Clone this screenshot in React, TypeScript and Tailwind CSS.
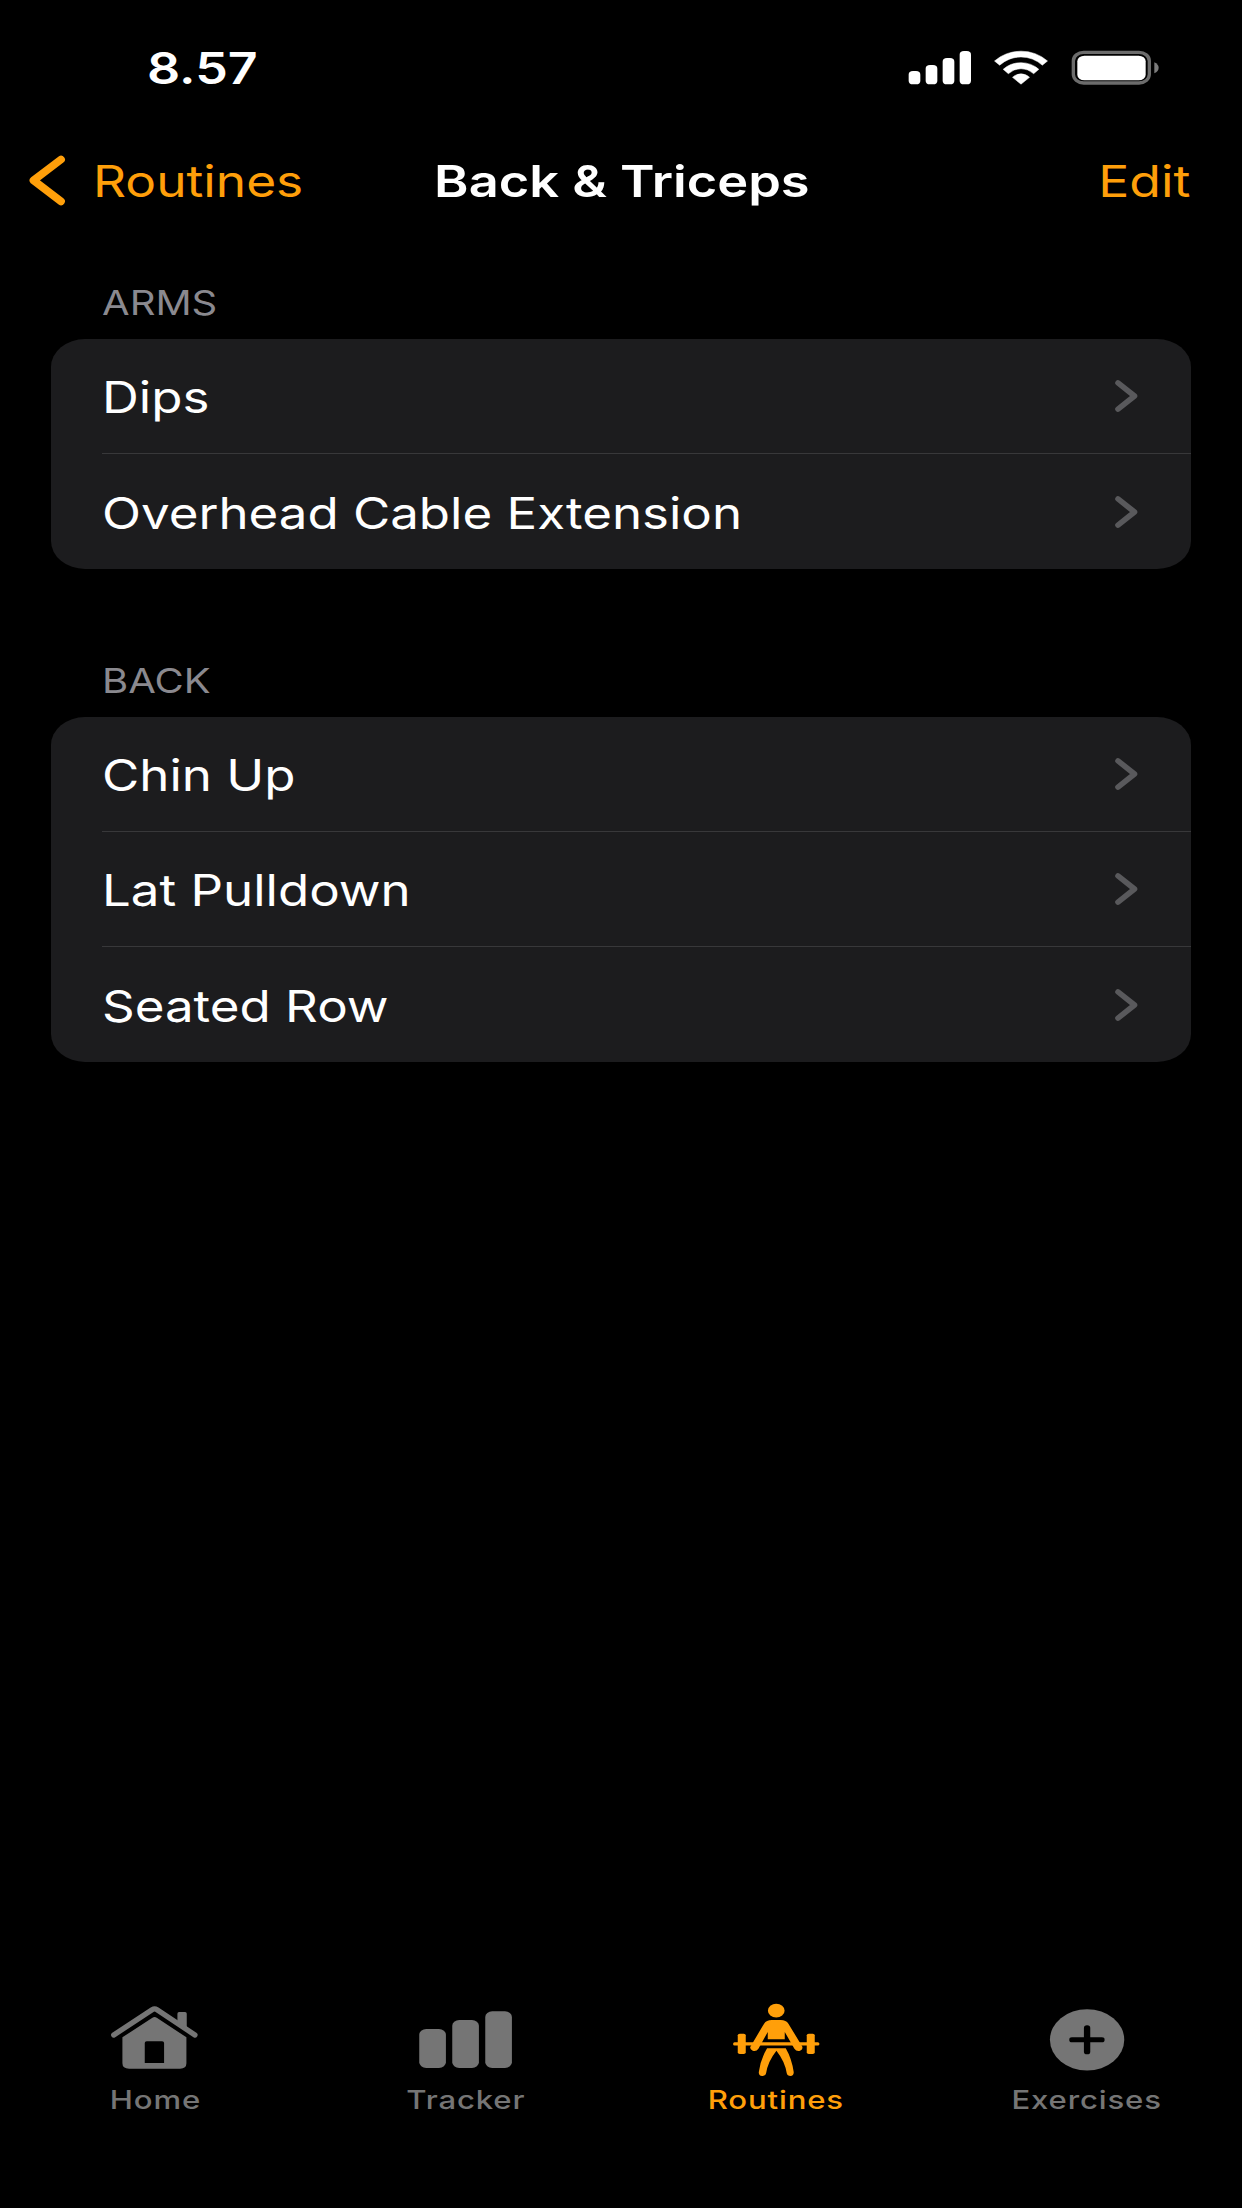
import type { ReactNode } from "react";

type Section = { title: string; items: string[] };

const sections: Section[] = [
  { title: "Arms", items: ["Dips", "Overhead Cable Extension"] },
  { title: "Back", items: ["Chin Up", "Lat Pulldown", "Seated Row"] },
];

function StatusIcons() {
  return (
    <svg className="h-[40px] w-[262px]" viewBox="80 53 786 120" fill="#fff">
      <rect x="85" y="122" width="35" height="40" rx="13" ry="11" />
      <rect x="136" y="104" width="35" height="58" rx="13" ry="11" />
      <rect x="187" y="83" width="35" height="79" rx="13" ry="11" />
      <rect x="238" y="62" width="34" height="100" rx="13" ry="11" />
      <g stroke="#fff" strokeWidth="1.5" strokeLinejoin="round">
        <path d="M342.5 92Q377 62.5 422 62.5T501.500 92L486 104.500Q458 80 422 80T358 104.500Z" />
        <path d="M368.500 117Q391 97 422 97T475.500 117L460 130Q443 115 422 115T384 130Z" />
        <path d="M396.500 141Q407 130.500 422 130.500T447.500 141L422 161.500Z" />
      </g>
      <rect x="579" y="66" width="228" height="92" rx="31" ry="26" fill="none" stroke="#6c6c6c" strokeWidth="10" />
      <rect x="591" y="76" width="205" height="74" rx="21" ry="17" />
      <path d="M822 96Q835 102 835 112.500T822 129Z" fill="#7c7c7c" />
    </svg>
  );
}

function BackChevron() {
  return (
    <svg className="h-[54px] w-[38px] shrink-0" viewBox="0 0 38 54" fill="none" stroke="#ff9f0a" strokeLinecap="round" strokeLinejoin="round" strokeWidth="7.800">
      <path d="M33 5.500L5.500 26.400L33 47.300" />
    </svg>
  );
}

function RowChevron() {
  return (
    <svg className="h-[34px] w-[25px] shrink-0" viewBox="0 0 25 34" fill="none" stroke="#59595c" strokeLinecap="round" strokeLinejoin="round" strokeWidth="5.600">
      <path d="M3 3.900L19.500 17L3 30.100" />
    </svg>
  );
}

function HomeIcon() {
  return (
    <svg className="h-[80px] w-[100px]" viewBox="45.750 60 300 240" fill="currentColor">
      <path d="M72 165L187 89Q194.500 84.500 202 89L315.500 165" fill="none" stroke="currentColor" strokeWidth="16" strokeLinecap="round" />
      <path d="M263 128V101Q263 96 268 96H286Q291 96 291 101V148Z" />
      <path
        fillRule="evenodd"
        d="M188 113Q194.500 109 201 113L290 172V250Q290 266 271 266H118Q98 266 98 250V172ZM171 184Q165 184 165 189V249H223V189Q223 184 217 184Z"
      />
    </svg>
  );
}

function TrackerIcon() {
  return (
    <svg className="h-[80px] w-[100px]" viewBox="77.250 60 300 240" fill="currentColor">
      <rect x="87" y="147" width="80" height="117" rx="21" ry="17" />
      <rect x="186" y="120" width="80" height="144" rx="21" ry="17" />
      <rect x="285" y="94" width="80" height="170" rx="21" ry="17" />
    </svg>
  );
}

function RoutinesIcon() {
  return (
    <svg className="h-[80px] w-[100px]" viewBox="108.750 60 300 240" fill="currentColor">
      <ellipse cx="259.500" cy="92" rx="25" ry="20.500" />
      <path d="M246 120H273Q289 120 296 131L337 199Q341 208 331 212Q320 215 314 206L285 156V178H234V156L206 206Q200 215 189 212Q179 208 182 200L223 131Q230 120 246 120Z" />
      <rect x="130" y="187" width="259" height="9.500" rx="4.700" />
      <rect x="144" y="161" width="24" height="61" rx="6" ry="5" />
      <rect x="351" y="161" width="24" height="61" rx="6" ry="5" />
      <path d="M232 205H288Q306 236 312 277Q312 288 302 288Q293 288 291 280Q286 245 260 212Q234 245 229 280Q227 288 217 288Q207 288 207 277Q213 236 232 205Z" />
    </svg>
  );
}

function ExercisesIcon() {
  return (
    <svg className="h-[80px] w-[100px]" viewBox="110.250 60 300 240" fill="currentColor">
      <ellipse cx="260.500" cy="179.500" rx="111.500" ry="92" />
      <rect x="207" y="172" width="106" height="15" rx="8" ry="7" fill="#000" />
      <rect x="251" y="136" width="19" height="87" rx="9" ry="8" fill="#000" />
    </svg>
  );
}

function Tab({ icon, label, active }: { icon: ReactNode; label: string; active?: boolean }) {
  return (
    <button className={`flex flex-1 flex-col items-center ${active ? "text-[#ff9f0a]" : "text-[#757575]"}`}>
      {icon}
      <span className="block origin-center scale-x-[1.22] text-[25.500px] leading-[40px] font-medium tracking-[0.7px]">
        {label}
      </span>
    </button>
  );
}

function ListSection({ title, items }: Section) {
  return (
    <section>
      <h2 className="pl-[51px] text-[34px] leading-[48px] text-[#8a898f] uppercase">
        <span className="block origin-left scale-x-[1.178]">{title}</span>
      </h2>
      <ul className="mt-[12px] overflow-hidden rounded-[34px_/_28px] bg-[#1c1c1e] pl-[51px]">
        {items.map((item, i) => (
          <li
            key={item}
            className={`flex h-[115px] items-center justify-between pr-[51px] ${i < items.length - 1 ? "border-b border-[#38383a]" : ""}`}
          >
            <span className="block origin-left scale-x-[1.159] pt-[2px] text-[44px] leading-[60px] text-white">
              {item}
            </span>
            <RowChevron />
          </li>
        ))}
      </ul>
    </section>
  );
}

export default function App() {
  return (
    <div className="flex h-[2208px] w-[1242px] flex-col overflow-hidden bg-black font-[Inter,sans-serif] whitespace-nowrap">
      <header>
        <div className="flex h-[136px] items-center justify-between pr-[73.300px] pl-[147px]">
          <span className="block origin-left scale-x-[1.18] text-[44px] leading-[60px] font-semibold text-white">8.57</span>
          <StatusIcons />
        </div>
        <div className="grid h-[90px] grid-cols-3 items-center px-[28px]">
          <button className="flex items-center gap-[27px] text-[44px] leading-[60px] text-[#ff9f0a]">
            <BackChevron />
            <span className="block origin-left scale-x-[1.168]">Routines</span>
          </button>
          <h1 className="flex justify-center text-[44px] leading-[60px] font-semibold text-white">
            <span className="block origin-center scale-x-[1.190] pl-[1px]">Back &amp; Triceps</span>
          </h1>
          <button className="flex justify-end pr-[24px] text-[44px] leading-[60px] text-[#ff9f0a]">
            <span className="block origin-right scale-x-[1.175]">Edit</span>
          </button>
        </div>
      </header>
      <main className="flex flex-1 flex-col gap-[88px] px-[51px] pt-[53px]">
        {sections.map((s) => (
          <ListSection key={s.title} {...s} />
        ))}
      </main>
      <nav className="flex h-[208px]">
        <Tab icon={<HomeIcon />} label="Home" />
        <Tab icon={<TrackerIcon />} label="Tracker" />
        <Tab icon={<RoutinesIcon />} label="Routines" active />
        <Tab icon={<ExercisesIcon />} label="Exercises" />
      </nav>
    </div>
  );
}
